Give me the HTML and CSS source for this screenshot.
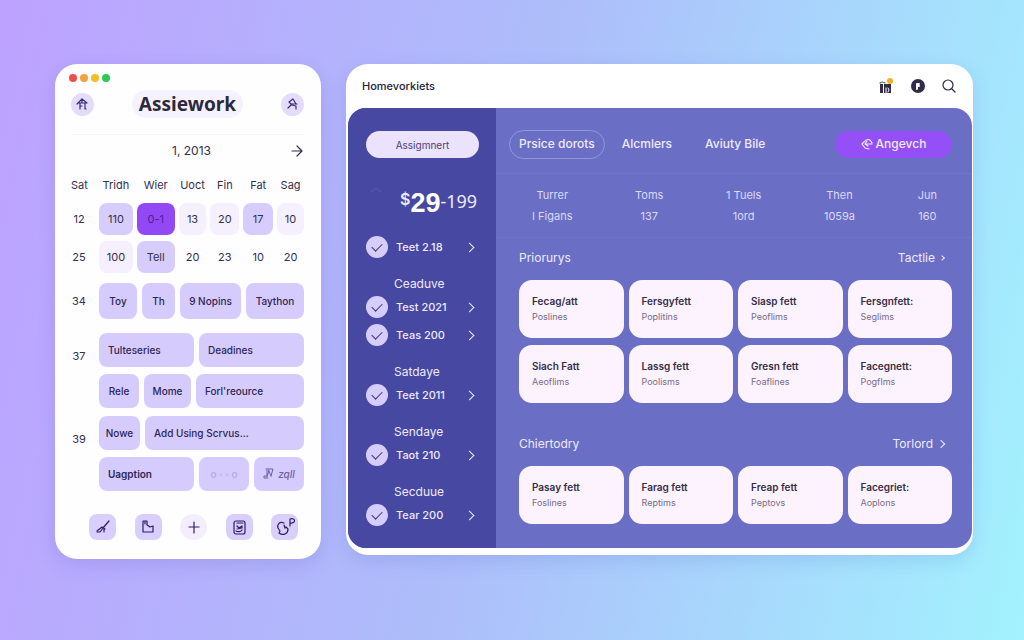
FILE: index.html
```html
<!DOCTYPE html>
<html lang="en">
<head>
<meta charset="utf-8">
<meta name="viewport" content="width=device-width, initial-scale=1">
<title>Assiework</title>
<link rel="stylesheet" href="styles.css">
</head>
<body>
<main class="stage">
  <section class="planner" aria-label="Planner">
    <div class="dots"><i class="dot red"></i><i class="dot orange"></i><i class="dot yellow"></i><i class="dot green"></i></div>
    <header class="planner-head">
      <button class="round" aria-label="Home"><svg width="13" height="14" viewBox="0 0 13 14"><path d="M1 7 6 2l5 4M2 6h8M6 2v4M4 6v6M4 9h2M9 6v6h1"/></svg></button>
      <h1>Assiework</h1>
      <button class="round" aria-label="Profile"><svg width="13" height="14" viewBox="0 0 13 14"><path d="M3 5 7 2l3 5M3 5l2 2h6M6 7l-4 4M6 8l4 1v3"/></svg></button>
    </header>
    <div class="date"><span>1, 2013</span><button class="plain" aria-label="Next"><svg width="12" height="12" viewBox="0 0 12 12"><path d="M1 6h10M6 1l5 5-5 5"/></svg></button></div>
    <div class="row week"><span class="num">Sat</span><div class="days"><span>Tridh</span><span>Wier</span><span>Uoct</span><span>Fin</span><span>Fat</span><span>Sag</span></div></div>
    <div class="row"><span class="num">12</span><div class="days"><button class="day mid">110</button><button class="day strong">0-1</button><button class="day pale">13</button><button class="day pale">20</button><button class="day mid">17</button><button class="day pale">10</button></div></div>
    <div class="row second"><span class="num">25</span><div class="days"><button class="day pale">100</button><button class="day mid">Tell</button><button class="day">20</button><button class="day">23</button><button class="day">10</button><button class="day">20</button></div></div>
    <div class="row short"><span class="num">34</span><div class="chips mix-a"><button>Toy</button><button>Th</button><button>9 Nopins</button><button>Taython</button></div></div>
    <div class="row group">
      <span class="num">37</span>
      <div class="stack">
        <div class="chips mix-b"><button>Tulteseries</button><button>Deadines</button></div>
        <div class="chips mix-c"><button>Rele</button><button>Mome</button><button>Forl'reource</button></div>
      </div>
    </div>
    <div class="row group">
      <span class="num">39</span>
      <div class="stack">
        <div class="chips mix-d"><button>Nowe</button><button>Add Using Scrvus...</button></div>
        <div class="chips mix-e"><button class="bold">Uagption</button><button class="faint">o ▫ ▫ o</button><button class="sketch"><svg width="12" height="12" viewBox="0 0 12 12"><path d="M3 1h7L8 8M4 2v6H1v2h4M6 3l2 5M6 2 4 9"/></svg>zqll</button></div>
      </div>
    </div>
    <nav class="tools" aria-label="Tools">
      <button aria-label="Edit"><svg width="16" height="16" viewBox="0 0 16 16"><path d="M14 2 8 9M2 12l5-4 3 2M2 13h3l3-4M9 10v3"/></svg></button>
      <button aria-label="Page"><svg width="16" height="16" viewBox="0 0 16 16"><path d="M3 2h4v4l3 2 3-1v6H3zM5 2v3"/></svg></button>
      <button class="add" aria-label="Add"><svg width="16" height="16" viewBox="0 0 16 16"><path d="M8 3v11M3 8h10"/></svg></button>
      <button aria-label="Notes"><svg width="16" height="16" viewBox="0 0 16 16"><rect x="3" y="2" width="11" height="13" rx="2"/><path d="M6 4h6M6 7l2 2 3-2v2L6 10M5 12c2 1 5 1 6-1"/></svg></button>
      <button class="alert" aria-label="Alerts"><svg width="22" height="22" viewBox="0 0 22 22"><path d="M10 7C5 5 3 9 4 12l2 3-1 2c4 3 9 1 9-4l-2-2-1 1-1-3M16 3v7M16 3c6-2 6 5 0 4"/></svg></button>
    </nav>
  </section>

  <section class="window" aria-label="Homework">
    <header class="bar">
      <h2>Homevorkiets</h2>
      <div class="bar-icons">
        <button class="plain" aria-label="Inbox"><svg width="16" height="18" viewBox="0 0 16 18"><path class="ink" d="M2 7h3v9H2zM6 7h7v9H6z"/><path class="green-line" d="M2 6q2-2 5 0"/><path class="cut" d="M8 16v-5M10 11l1 2-1 2"/><circle class="gold" cx="12" cy="4" r="3"/></svg></button>
        <button class="plain" aria-label="Account"><svg width="14" height="14" viewBox="0 0 14 14"><circle class="ink" cx="7" cy="7" r="7"/><path class="cut thick" d="M6 10V5h2M6 7h2"/></svg></button>
        <button class="plain" aria-label="Search"><svg width="14" height="14" viewBox="0 0 14 14"><circle cx="6" cy="6" r="5"/><path d="m10 10 3 3"/></svg></button>
      </div>
    </header>
    <div class="panel">
      <aside class="side">
        <button class="pill">Assigmnert</button>
        <div class="price"><svg class="hint" width="12" height="8" viewBox="0 0 12 8"><path d="m1 6 5-4 5 4"/></svg><span class="cur">$</span><strong>29</strong><span class="old">-199</span></div>
        <div class="lists">
          <div><label><input type="checkbox" checked><span>Teet 2.18</span><b></b></label></div>
          <div><h3>Ceaduve</h3><label><input type="checkbox" checked><span>Test 2021</span><b></b></label><label><input type="checkbox" checked><span>Teas 200</span><b></b></label></div>
          <div><h3>Satdaye</h3><label><input type="checkbox" checked><span>Teet 2011</span><b></b></label></div>
          <div><h3>Sendaye</h3><label><input type="checkbox" checked><span>Taot 210</span><b></b></label></div>
          <div><h3>Secduue</h3><label><input type="checkbox" checked><span>Tear 200</span><b></b></label></div>
        </div>
      </aside>
      <div class="content">
        <nav class="tabs"><button class="tab active">Prsice dorots</button><button class="tab">Alcmlers</button><button class="tab">Aviuty Bile</button><button class="cta"><svg width="12" height="12" viewBox="0 0 12 12"><path d="M11 5C9 0 5 1 3 4L1 6l3 4 4 1M4 6h7M6 3 4 6l3 2"/></svg>Angevch</button></nav>
        <dl class="stats">
          <div><dt>Turrer</dt><dd>I Figans</dd></div><div><dt>Toms</dt><dd>137</dd></div><div><dt>1 Tuels</dt><dd>1ord</dd></div><div><dt>Then</dt><dd>1059a</dd></div><div><dt>Jun</dt><dd>160</dd></div>
        </dl>
        <section class="block">
          <header><h3>Priorurys</h3><a href="#all">Tactlie<b class="small"></b></a></header>
          <div class="cards">
            <article><h4>Fecag/att</h4><p>Poslines</p></article>
            <article><h4>Fersgyfett</h4><p>Poplitins</p></article>
            <article><h4>Siasp fett</h4><p>Peoflims</p></article>
            <article><h4>Fersgnfett:</h4><p>Seglims</p></article>
            <article><h4>Siach Fatt</h4><p>Aeoflims</p></article>
            <article><h4>Lassg fett</h4><p>Poolisms</p></article>
            <article><h4>Gresn fett</h4><p>Foaflines</p></article>
            <article><h4>Facegnett:</h4><p>Pogflms</p></article>
          </div>
        </section>
        <section class="block">
          <header><h3>Chiertodry</h3><a href="#more">Torlord<b></b></a></header>
          <div class="cards">
            <article><h4>Pasay fett</h4><p>Foslines</p></article>
            <article><h4>Farag fett</h4><p>Reptims</p></article>
            <article><h4>Freap fett</h4><p>Peptovs</p></article>
            <article><h4>Facegriet:</h4><p>Aoplons</p></article>
          </div>
        </section>
      </div>
    </div>
  </section>
</main>
</body>
</html>
```

FILE: styles.css
```css
* { box-sizing: border-box; }

body {
  margin: 0;
  min-height: 100vh;
  font-family: Inter, "Liberation Sans", sans-serif;
  font-size: 11px;
  line-height: 16px;
  color: #33304a;
  background: linear-gradient(102deg, #bda2ff 0%, #adbefa 50%, #a2f2fe 100%);
}

h1, h2, h3, h4, p, dl, dd { margin: 0; }
button { border: 0; padding: 0; background: none; font: inherit; color: inherit; cursor: pointer; }
a { color: inherit; text-decoration: none; }
svg { display: block; fill: none; stroke: currentColor; stroke-width: 1.2; stroke-linecap: round; stroke-linejoin: round; }

.stage {
  display: grid;
  grid-template-columns: 266px 1fr;
  align-items: start;
  gap: 25px;
  padding: 64px 51px 64px 55px;
}

/* Planner card */
.planner {
  padding: 10px 17px 19px 16px;
  border-radius: 22px;
  background: #fefdff;
  box-shadow: 0 6px 18px rgba(90, 80, 190, .18);
}
.dots { display: flex; gap: 3px; height: 9px; margin-left: -2px; }
.dot { width: 8px; height: 8px; border-radius: 50%; }
.red { background: #ee4f49; }
.orange { background: #f5a13c; }
.yellow { background: #f4bd20; }
.green { background: #25cc57; }
.planner-head {
  display: flex;
  align-items: center;
  justify-content: space-between;
  margin-top: 7px;
  padding-bottom: 16px;
  border-bottom: 1px solid #f8f5fc;
}
.planner-head h1 {
  padding: 0 7px;
  border-radius: 14px;
  background: #f6f2fd;
  font: bold 19px/28px "Noto Sans", sans-serif;
  color: #2b293c;
}
.round {
  display: grid;
  place-items: center;
  width: 23px;
  height: 23px;
  border-radius: 50%;
  background: #e4dcfb;
  color: #3b2c79;
}
.plain { display: grid; place-items: center; }
.date {
  display: grid;
  grid-template-columns: 1fr auto 1fr;
  align-items: center;
  height: 32px;
  padding: 0 1px 0 9px;
  font-size: 12px;
}
.date span { grid-column: 2; }
.date button { justify-self: end; }
.row { display: flex; align-items: center; gap: 12px; }
.num { width: 16px; text-align: center; }
.days {
  flex: 1;
  display: grid;
  grid-template-columns: 34fr 38fr 28fr 29fr 30fr 27fr;
  gap: 4px;
  text-align: center;
}
.week { margin: 10px 0; }
.day { height: 32px; border-radius: 8px; }
.pale { background: #f6effe; }
.mid { background: #d7cdfd; }
.strong { background: #9249f5; color: #4a2296; }
.second { margin-top: 6px; }
.short { margin-top: 10px; }
.chips { flex: 1; display: grid; gap: 5px; }
.chips button {
  height: 34px;
  border-radius: 8px;
  background: #d5ccfd;
  color: #2e2556;
  font-size: 10px;
  font-weight: 500;
  white-space: nowrap;
}
.chips.mix-a button { height: 36px; }
.mix-a { grid-template-columns: 38fr 33fr 61fr 58fr; }
.mix-b { grid-template-columns: 95fr 105fr; }
.mix-c { grid-template-columns: 40fr 47fr 108fr; }
.mix-d { grid-template-columns: 41fr 159fr; }
.mix-e { grid-template-columns: 95fr 50fr 50fr; }
.mix-b button, .mix-c button:last-child, .mix-d button:last-child, .mix-e .bold {
  padding-left: 9px;
  text-align: left;
}
.chips .bold { font-weight: 600; }
.chips .faint { color: #b5a8e6; }
.chips .sketch {
  display: flex;
  align-items: center;
  justify-content: center;
  gap: 3px;
  color: #6d5fa8;
  font-style: italic;
}
.sketch svg { stroke-width: 1; }
.group { align-items: start; margin-top: 14px; }
.group + .group { margin-top: 8px; }
.group .num { padding-top: 15px; }
.stack { flex: 1; display: grid; gap: 7px; }
.tools {
  display: flex;
  justify-content: space-between;
  margin-top: 23px;
  padding: 0 6px 0 18px;
}
.tools button {
  display: grid;
  place-items: center;
  width: 27px;
  height: 26px;
  border-radius: 8px;
  background: #d8cffc;
  color: #2f1c6d;
}
.tools .add { border-radius: 50%; background: #f4edfe; }

/* Homework window */
.window {
  padding: 0 1px 7px 2px;
  border-radius: 22px;
  background: #fff;
  box-shadow: 0 6px 18px rgba(70, 90, 190, .16);
}
.bar {
  display: flex;
  align-items: center;
  justify-content: space-between;
  height: 44px;
  padding: 0 16px 0 14px;
}
.bar h2 { font-size: 11px; font-weight: 500; color: #24213a; }
.bar-icons { display: flex; align-items: center; gap: 17px; color: #2f2b48; }
.ink { fill: #302c4c; stroke: none; }
.cut { stroke: #fff; stroke-width: 1; }
.thick { stroke-width: 2; }
.gold { fill: #f3b01f; stroke: none; }
.green-line { stroke: #44775b; }
.panel {
  display: grid;
  grid-template-columns: 148px 1fr;
  overflow: hidden;
  border-radius: 18px;
  background: #6a6fc5;
  color: #eeeaff;
}
.side { padding: 23px 17px 19px 18px; background: #4648a2; }
.pill {
  display: block;
  width: 100%;
  height: 27px;
  border-radius: 14px;
  background: #ebe2fe;
  color: #49407c;
  font-size: 10px;
}
.price { display: flex; align-items: flex-start; height: 44px; margin-top: 31px; }
.hint { margin: -3px 18px 0 4px; color: #5656ae; }
.cur { font-size: 16px; font-weight: 600; line-height: 20px; }
.price strong { font: bold 27px/28px "Liberation Sans", sans-serif; color: #fff; }
.old { font: 18px/24px "Noto Sans", sans-serif; }
.lists { display: grid; gap: 13px; }
.lists h3 { padding-left: 28px; font-size: 12px; line-height: 19px; font-weight: 400; }
.lists label { display: flex; align-items: center; gap: 8px; height: 28px; font-size: 11px; font-weight: 500; }
.lists label span { flex: 1; }
.lists input {
  appearance: none;
  display: grid;
  place-items: center;
  width: 22px;
  height: 22px;
  margin: 0;
  border-radius: 50%;
  background: #d6cdfb;
}
.lists input:checked::before {
  content: "";
  width: 9px;
  height: 5px;
  margin-bottom: 3px;
  border: solid #40366f;
  border-width: 0 0 1px 1px;
  rotate: -45deg;
}
b { display: inline-block; width: 7px; height: 7px; border: solid currentColor; border-width: 1px 1px 0 0; rotate: 45deg; }
.lists b { margin-right: 6px; }
.tabs {
  display: flex;
  align-items: center;
  height: 66px;
  padding: 7px 20px 0 13px;
  border-bottom: 1px solid #7175c9;
  font-size: 12px;
  font-weight: 500;
}
.tab { height: 29px; margin-right: 13px; padding: 0 9px; border: 1px solid transparent; border-radius: 15px; }
.tab.active { border-color: #9596dc; margin-right: 7px; }
.cta {
  display: flex;
  align-items: center;
  justify-content: center;
  gap: 3px;
  width: 117px;
  height: 27px;
  margin-left: auto;
  border-radius: 14px;
  background: #9450f6;
}
.stats {
  display: flex;
  justify-content: space-between;
  height: 64px;
  padding: 11px 35px 0 36px;
  border-bottom: 1px solid #7074c8;
  line-height: 21px;
  text-align: center;
  color: #dcd9fa;
}
.block { padding: 8px 20px 0 23px; }
.block + .block { padding-top: 29px; }
.block header { display: flex; justify-content: space-between; align-items: center; height: 24px; margin-bottom: 10px; }
.block h3 { font-size: 12px; font-weight: 400; }
.block a { display: flex; align-items: center; gap: 5px; padding-right: 8px; font-size: 12px; }
.block a b { width: 6px; height: 6px; }
.block a b.small { width: 4px; height: 4px; }
.cards { display: grid; grid-template-columns: repeat(4, 1fr); gap: 7px 5px; }
.cards article { padding: 13px 13px; border-radius: 13px; background: #fdf3ff; }
.cards h4 { font-size: 10px; font-weight: 600; line-height: 16px; white-space: nowrap; color: #342e48; }
.cards p { font-size: 9px; line-height: 16px; color: #766c87; }

@media (max-width: 860px) {
  .stage { grid-template-columns: 1fr; padding: 24px; }
}
```
